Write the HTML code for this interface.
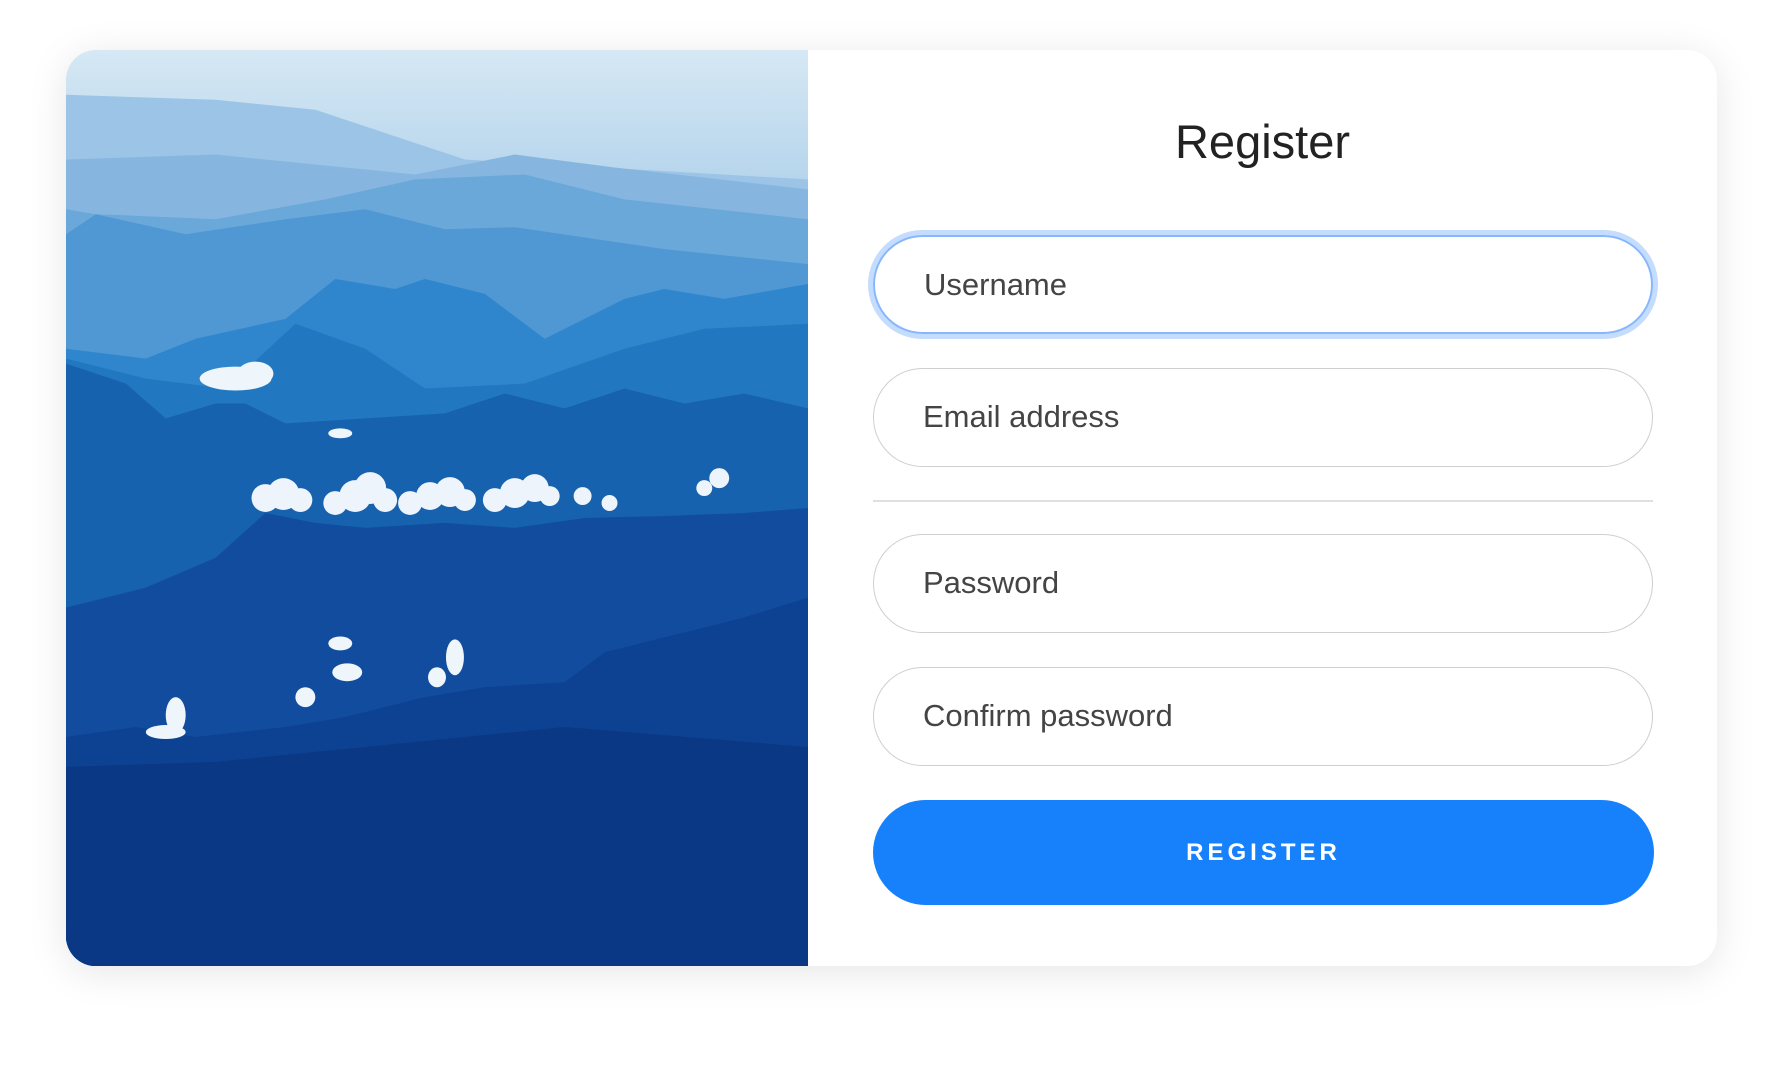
<!DOCTYPE html>
<html><head><style>
html,body{margin:0;padding:0;background:#fff;width:1788px;height:1082px;overflow:hidden;font-family:"Liberation Sans",sans-serif;}
.card{position:absolute;left:66px;top:50px;width:1651px;height:916px;border-radius:30px;background:#fff;box-shadow:0 6px 40px rgba(0,0,0,0.10);overflow:hidden;}
.img{position:absolute;left:0;top:0;width:742px;height:916px;}
h1{position:absolute;left:742px;right:0;top:64px;margin:0;text-align:center;font-weight:400;font-size:47px;color:#222;line-height:56px;}
.inp{position:absolute;left:873px;width:780px;height:99px;box-sizing:border-box;border:1.5px solid #cfcfcf;border-radius:50px;font-size:31px;color:#444;padding-left:49px;line-height:96px;}
.focus{border:2px solid #86b7fe;box-shadow:0 0 0 5px #c4dcfd;color:#444;}
.div{position:absolute;left:873px;width:780px;height:1.5px;background:#e0e0e0;}
.btn{position:absolute;left:873px;width:781px;height:105px;border-radius:53px;background:#1780fb;color:#fff;font-weight:700;font-size:24px;letter-spacing:4px;text-align:center;line-height:105px;}
</style></head><body>
<div class="card">
<svg class="img" viewBox="0 0 744 920" preserveAspectRatio="none">
<defs><linearGradient id="sky" x1="0" y1="0" x2="0" y2="1"><stop offset="0" stop-color="#d6e8f4"/><stop offset="0.2" stop-color="#a9cde9"/><stop offset="1" stop-color="#6aa6d8"/></linearGradient></defs>
<rect width="744" height="920" fill="url(#sky)"/>
<path d="M0 45 L150 50 L250 60 L400 110 L744 130 L744 920 L0 920Z" fill="#9cc4e6"/>
<path d="M0 110 L150 105 L250 115 L350 125 L450 105 L550 118 L744 140 L744 920 L0 920Z" fill="#86b6e0"/>
<path d="M0 160 L30 165 L60 166 L150 170 L260 150 L350 130 L460 125 L560 150 L744 170 L744 920 L0 920Z" fill="#6aa8da"/>
<path d="M0 185 L30 165 L120 185 L220 170 L300 160 L380 180 L450 178 L600 200 L744 215 L744 920 L0 920Z" fill="#4f98d3"/>
<path d="M0 300 L80 310 L130 290 L220 270 L270 230 L330 240 L360 230 L420 245 L480 290 L560 250 L600 240 L660 250 L744 235 L744 920 L0 920Z" fill="#2f86cc"/>
<path d="M0 310 L80 330 L160 340 L230 275 L300 300 L360 340 L460 335 L560 300 L640 280 L744 275 L744 920 L0 920Z" fill="#2278c0"/>
<path d="M0 315 L60 335 L100 370 L150 355 L180 355 L220 375 L300 370 L380 365 L440 345 L500 360 L560 340 L620 355 L680 345 L744 360 L744 920 L0 920Z" fill="#1762ae"/>
<g fill="#eef4fb">
<circle cx="200" cy="450" r="14"/><circle cx="218" cy="446" r="16"/><circle cx="235" cy="452" r="12"/>
<circle cx="270" cy="455" r="12"/><circle cx="290" cy="448" r="16"/><circle cx="305" cy="440" r="16"/><circle cx="320" cy="452" r="12"/>
<circle cx="345" cy="455" r="12"/><circle cx="365" cy="448" r="14"/><circle cx="385" cy="444" r="15"/><circle cx="400" cy="452" r="11"/>
<circle cx="430" cy="452" r="12"/><circle cx="450" cy="445" r="15"/><circle cx="470" cy="440" r="14"/><circle cx="485" cy="448" r="10"/>
<circle cx="518" cy="448" r="9"/><circle cx="545" cy="455" r="8"/><circle cx="655" cy="430" r="10"/><circle cx="640" cy="440" r="8"/>
</g>
<path d="M0 560 L80 540 L150 510 L200 465 L250 475 L300 480 L380 475 L450 480 L520 470 L600 468 L680 465 L744 460 L744 920 L0 920Z" fill="#124c9e"/>
<path d="M0 690 L70 680 L130 690 L220 680 L280 670 L360 650 L420 640 L500 635 L540 605 L600 590 L680 570 L744 550 L744 920 L0 920Z" fill="#0d4191"/>
<path d="M0 720 L150 715 L300 700 L500 680 L744 700 L744 920 L0 920Z" fill="#0a3884"/>
<g fill="#eef5fb">
<ellipse cx="170" cy="330" rx="36" ry="12"/><ellipse cx="190" cy="325" rx="18" ry="12"/>
<ellipse cx="275" cy="385" rx="12" ry="5"/>
<ellipse cx="275" cy="596" rx="12" ry="7"/><ellipse cx="282" cy="625" rx="15" ry="9"/>
<ellipse cx="110" cy="668" rx="10" ry="18"/><ellipse cx="100" cy="685" rx="20" ry="7"/>
<ellipse cx="390" cy="610" rx="9" ry="18"/><ellipse cx="372" cy="630" rx="9" ry="10"/>
<ellipse cx="240" cy="650" rx="10" ry="10"/>
</g>
</svg>
<h1>Register</h1>
</div>
<div class="inp focus" style="top:235px;">Username</div>
<div class="inp" style="top:368px;">Email address</div>
<div class="div" style="top:500px"></div>
<div class="inp" style="top:534px;">Password</div>
<div class="inp" style="top:667px;">Confirm password</div>
<div class="btn" style="top:800px">REGISTER</div>
</body></html>
